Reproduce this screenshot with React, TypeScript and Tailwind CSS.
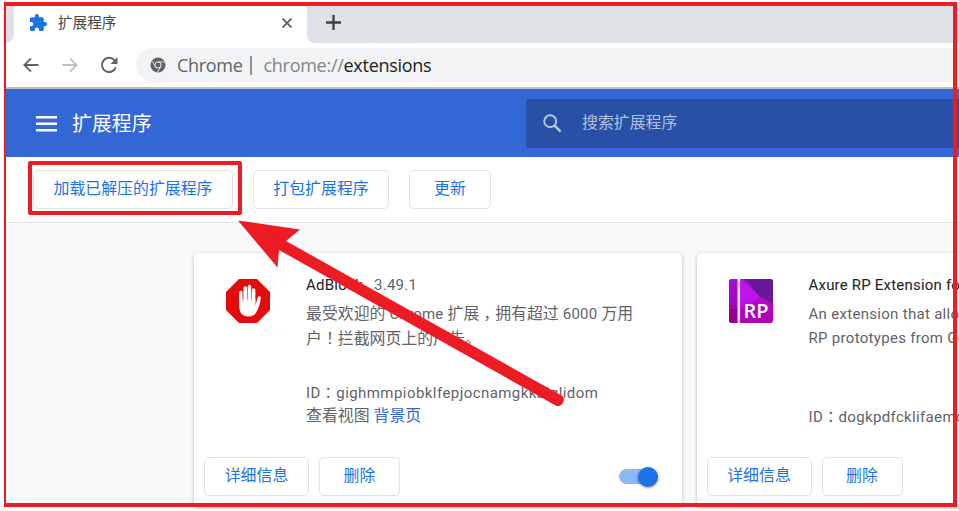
import React from "react";

const cjk = "font-['Roboto','Noto_Sans_CJK_SC',sans-serif]";

function Mark({ children }: { children: React.ReactNode }) {
  return <span className="font-['Noto_Sans_CJK_TC',sans-serif]">{children}</span>;
}

function Comma() {
  return <span className="inline-block w-[15.900px] pl-[4px] leading-none font-['Noto_Sans_CJK_SC',sans-serif]"><span className="-mr-[4px]">，</span></span>;
}

function OutlineButton({ label, className }: { label: string; className: string }) {
  return (
    <button
      className={`flex h-[39px] shrink-0 items-center justify-center rounded-[5px] border border-[#dfe1e5] bg-white pb-[1px] text-[15.9px] leading-none text-[#1a73e8] ${className}`}
    >
      {label}
    </button>
  );
}

function PuzzleIcon() {
  return (
    <svg className="mb-[1px] h-[17px] w-[17px] shrink-0" viewBox="2 1 21 21" fill="#1a73e8">
      <path d="M20.5 11H19V7c0-1.1-.9-2-2-2h-4V3.5a2.5 2.5 0 0 0-5 0V5H4c-1.1 0-2 .9-2 2v3.8h1.5a2.7 2.7 0 0 1 0 5.4H2V20c0 1.1.9 2 2 2h3.8v-1.5a2.7 2.7 0 0 1 5.4 0V22H17c1.1 0 2-.9 2-2v-4h1.5a2.5 2.5 0 0 0 0-5z" />
    </svg>
  );
}

function ChromeIcon() {
  return (
    <svg className="h-[16px] w-[16px] shrink-0" viewBox="0 0 16 16">
      <circle cx="8" cy="8" r="7.5" fill="#5f6368" />
      <circle cx="8" cy="8" r="3.1" fill="#5f6368" stroke="#f1f3f4" strokeWidth="1" />
      <path d="M8 4.9h6.7M5.3 9.6 2 3.9M10.7 9.6 7.5 15.2" stroke="#f1f3f4" strokeWidth=".8" fill="none" />
    </svg>
  );
}

function TabStrip() {
  return (
    <div className="flex h-[41px] shrink-0 bg-white">
      <div className="w-[10px] shrink-0 rounded-br-[8px] bg-[#dee1e6]" />
      <div className="flex w-[293px] shrink-0 bg-[#dee1e6]">
        <div className="flex w-full items-center rounded-t-[8px] bg-white pl-[16px] pr-[15px]">
          <PuzzleIcon />
          <span className="ml-[11px] pt-[1px] text-[14.6px] leading-none text-[#45494d]">扩展程序</span>
          <svg className="ml-auto h-[10px] w-[10px]" viewBox="0 0 10 10" stroke="#5f6368" strokeWidth="1.9">
            <path d="M.5.5l9 9M9.5.5l-9 9" />
          </svg>
        </div>
      </div>
      <div className="flex flex-1 items-center rounded-bl-[8px] bg-[#dee1e6] pl-[19px]">
        <svg className="h-[15px] w-[15px]" viewBox="0 0 15 15" stroke="#3c4043" strokeWidth="2.3">
          <path d="M7.5 0v15M0 7.5h15" />
        </svg>
      </div>
    </div>
  );
}

function AddressBar() {
  return (
    <div className="flex h-[46px] shrink-0 items-center border-b-2 border-[#b9bdc5] bg-white pl-[19px]">
      <svg className="h-[16px] w-[16px] shrink-0" viewBox="0 0 16 16" fill="none" stroke="#5f6368" strokeWidth="1.8">
        <path d="M15.5 8H1.5M8 1.3 1.3 8 8 14.7" />
      </svg>
      <svg className="ml-[23px] h-[16px] w-[16px] shrink-0" viewBox="0 0 16 16" fill="none" stroke="#bdc1c6" strokeWidth="1.8">
        <path d="M.5 8h14M8 1.3 14.7 8 8 14.7" />
      </svg>
      <svg className="ml-[22px] h-[18px] w-[18px] shrink-0" viewBox="0 0 18 18">
        <path d="M15.8 11.2a7.1 7.1 0 1 1-1.5-7.1L15.6 5.4" fill="none" stroke="#5f6368" strokeWidth="2" />
        <path d="M17.5 1v7h-7z" fill="#5f6368" />
      </svg>
      <div className="ml-[18px] flex h-[34px] flex-1 items-center rounded-l-full bg-[#f1f3f4] pl-[14px] font-['Open_Sans',sans-serif] text-[18px] leading-none">
        <ChromeIcon />
        <span className="ml-[11px] w-[66px] tracking-[-0.3px] text-[#5f6368]">Chrome</span>
        <span className="ml-[7px] h-[19px] w-[1.500px] bg-[#8f9398]" />
        <span className="ml-[12px] whitespace-nowrap tracking-[-0.280px] text-[#80868b]">
          chrome://<span className="text-[#202124]">extensions</span>
        </span>
      </div>
    </div>
  );
}

function Header() {
  return (
    <header className="flex h-[68px] shrink-0 items-center bg-[#3367d6]">
      <svg className="ml-[32px] mt-[1px] h-[16px] w-[21px] shrink-0" viewBox="0 0 21 16" fill="#fff">
        <path d="M0 0h21v2.4H0zM0 6.5h21v2.4H0zM0 13h21v2.4H0z" />
      </svg>
      <h1 className="ml-[15px] w-[100px] pt-[4px] text-[19.9px] leading-none text-white">扩展程序</h1>
      <div className="ml-[354px] flex h-[49px] flex-1 items-center rounded-l-[3px] bg-[#2850a7] pl-[17px]">
        <svg className="h-[19px] w-[19px]" viewBox="0 0 19 19" fill="none" stroke="#bbc8e4">
          <circle cx="7.2" cy="7.2" r="6" strokeWidth="1.9" />
          <path d="m11.6 11.6 6 6" strokeWidth="2.4" />
        </svg>
        <span className="ml-[20px] text-[15.9px] leading-none text-[#b2c1e1]">搜索扩展程序</span>
      </div>
    </header>
  );
}

function AdBlockIcon() {
  return (
    <svg className="h-[44px] w-[44px]" viewBox="0 0 44 44">
      <path d="M13 0h18l13 13v18L31 44H13L0 31V13z" fill="#e50b0d" />
      <path d="M14.8 28V13.500M19.2 24V9M23.400 24V7.500M27.600 24V11" stroke="#fff" strokeWidth="3.500" strokeLinecap="round" />
      <path d="M13.050 20h16.300v6.500l2.400-8c.6-1.800 3.200-1.400 3 .4-.7 6-2.300 11-4.800 14.800C27.500 38.500 18.500 38.800 15.200 34.500 13.500 32 13.050 27 13.050 20z" fill="#fff" />
      <path d="M17 15v8M21.300 14v8M25.500 14v8" stroke="#f0a0a0" strokeWidth=".7" />
    </svg>
  );
}

function AxureIcon() {
  return (
    <svg className="h-[44px] w-[44px]" viewBox="0 0 44 44">
      <defs>
        <linearGradient id="spine" x1="0" y1="0" x2="0" y2="1">
          <stop offset="0" stopColor="#a40ed8" />
          <stop offset=".68" stopColor="#a403b5" />
          <stop offset=".7" stopColor="#840088" />
          <stop offset="1" stopColor="#940092" />
        </linearGradient>
        <linearGradient id="cover" x1="0" y1="0" x2="0" y2="1">
          <stop offset="0" stopColor="#bd17e2" />
          <stop offset=".45" stopColor="#c311ed" />
          <stop offset="1" stopColor="#ae00a4" />
        </linearGradient>
        <clipPath id="book"><rect width="44" height="44" rx="3" /></clipPath>
      </defs>
      <g clipPath="url(#book)">
        <rect width="44" height="44" fill="url(#cover)" />
        <path d="M13 0h31v12L31 18z" fill="#811aad" />
        <path d="M18 0h26v10L31 18z" fill="#5c178c" opacity=".7" />
        <path d="M44 9v16L31 18z" fill="#6c1799" />
        <path d="M31 18 44 25v19H11V31z" fill="#a703b0" opacity=".5" />
        <rect width="8.500" height="44" fill="url(#spine)" />
        <rect x="8.500" width="2.600" height="44" fill="#f1d9f7" />
      </g>
      <text x="14.500" y="39" fill="#fff" fontSize="19" fontWeight="600" textLength="25" lengthAdjust="spacingAndGlyphs" className="font-['Open_Sans',sans-serif]">RP</text>
    </svg>
  );
}

function Card({ icon, children, toggle }: { icon: React.ReactNode; children: React.ReactNode; toggle?: boolean }) {
  return (
    <section className="flex h-[254px] w-[488px] shrink-0 flex-col rounded-[5px] bg-white shadow-[0_1px_3px_1px_rgba(60,64,67,0.22)]">
      <div className="flex h-[204px] pl-[32px] pt-[26px]">
        <div className="w-[80px] shrink-0">{icon}</div>
        <div className="-mt-[6px] whitespace-nowrap text-[15px] leading-[24px] tracking-[0.25px] text-[#5f6368]">{children}</div>
      </div>
      <div className="flex items-center pl-[10px]">
        <OutlineButton label="详细信息" className="w-[105px]" />
        <OutlineButton label="删除" className="ml-[10px] w-[81px]" />
        {toggle && (
          <div className="ml-auto mr-[24px] flex h-[15px] w-[39px] items-center justify-end rounded-full bg-[#8cb8f4]">
            <span className="h-[20px] w-[20px] rounded-full bg-[#1a73e8] shadow-[0_1px_3px_rgba(0,0,0,0.4)]" />
          </div>
        )}
      </div>
    </section>
  );
}

export default function App() {
  return (
    <div className={`relative h-[511px] w-[959px] overflow-hidden bg-white pl-[4px] pt-[2px] ${cjk}`}>
      <div className="flex h-[507px] w-[955px] flex-col overflow-hidden bg-[#f8f9fb]">
        <TabStrip />
        <AddressBar />
        <Header />
        <div className="flex h-[66px] shrink-0 items-center border-b border-[#e3e4e6] bg-white pl-[29px]">
          <OutlineButton label="加载已解压的扩展程序" className="w-[200px]" />
          <OutlineButton label="打包扩展程序" className="ml-[20px] w-[136px]" />
          <OutlineButton label="更新" className="ml-[20px] w-[82px]" />
        </div>
        <main className="flex gap-[14.500px] pl-[190px] pt-[30px]">
          <Card icon={<AdBlockIcon />} toggle>
            <p className="h-[29px]"><span className="text-[#202124]">AdBlock</span><span className="ml-[11px]">3.49.1</span></p>
            <div className="h-[78px]">
              <p className="h-[24px]"><span className="text-[15.900px] tracking-normal">最受欢迎的</span> Chrome <span className="text-[15.900px] tracking-normal">扩展<Comma />拥有超过</span> 6000 <span className="text-[15.900px] tracking-normal">万用</span></p>
              <p className="h-[24px] text-[15.900px] tracking-normal">户<Mark>！</Mark>拦截网页上的广告。</p>
            </div>
            <p className="h-[24px] tracking-[0.440px]">ID<Mark>：</Mark>gighmmpiobklfepjocnamgkkbiglidom</p>
            <p className="h-[24px] text-[15.900px] tracking-normal">查看视图 <span className="text-[#3367d6]">背景页</span></p>
          </Card>
          <Card icon={<AxureIcon />}>
            <p className="h-[29px] tracking-[0.200px] text-[#202124]">Axure RP Extension for Chrome</p>
            <div className="h-[102px] tracking-[0.300px]">
              <p>An extension that allows you to view</p>
              <p>RP prototypes from Google Chrome</p>
            </div>
            <p className="tracking-[0.350px]">ID<Mark>：</Mark>dogkpdfcklifaemcdfbildhcofnopogp</p>
          </Card>
        </main>
      </div>
      <div className="pointer-events-none absolute left-[4px] top-[2px] h-[505px] w-[953px] border-[4px] border-l-[2px] border-[#ed1c24]" />
      <div className="pointer-events-none absolute left-[28px] top-[161px] h-[54px] w-[214px] rounded-[2px] border-[4px] border-[#ed1c24]" />
      <svg className="pointer-events-none absolute left-0 top-0 h-[511px] w-[959px]" viewBox="0 0 959 511">
        <path d="M238 220.500 300 229.500 286 241 562.500 396a6.300 6.300 0 0 1-6 10L279 250 277.500 267.500z" fill="#ed1c24" />
      </svg>
    </div>
  );
}
